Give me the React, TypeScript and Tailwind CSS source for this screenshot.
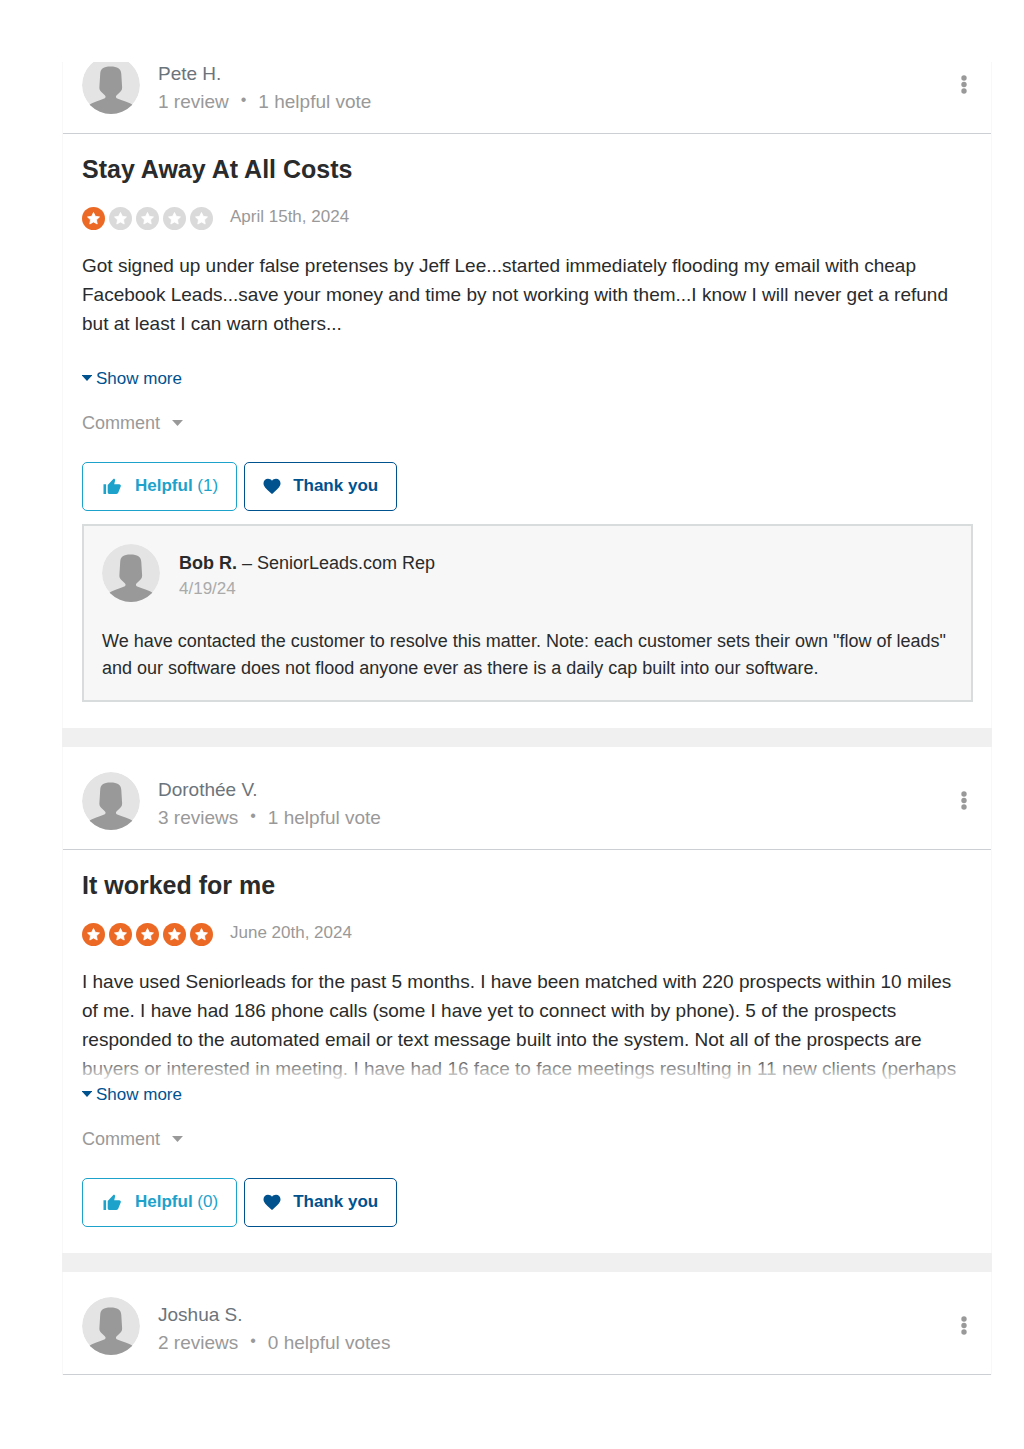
import React from "react";

type Reply = { author: string; role: string; date: string; text: string };

type Review = {
  name: string;
  reviews: string;
  votes: string;
  title?: string;
  rating?: number;
  date?: string;
  text?: string;
  helpful?: number;
  reply?: Reply;
};

const REVIEWS: Review[] = [
  {
    name: "Pete H.",
    reviews: "1 review",
    votes: "1 helpful vote",
    title: "Stay Away At All Costs",
    rating: 1,
    date: "April 15th, 2024",
    text: "Got signed up under false pretenses by Jeff Lee...started immediately flooding my email with cheap Facebook Leads...save your money and time by not working with them...I know I will never get a refund but at least I can warn others...",
    helpful: 1,
    reply: {
      author: "Bob R.",
      role: "SeniorLeads.com Rep",
      date: "4/19/24",
      text: 'We have contacted the customer to resolve this matter. Note: each customer sets their own "flow of leads" and our software does not flood anyone ever as there is a daily cap built into our software.',
    },
  },
  {
    name: "Dorothée V.",
    reviews: "3 reviews",
    votes: "1 helpful vote",
    title: "It worked for me",
    rating: 5,
    date: "June 20th, 2024",
    text: "I have used Seniorleads for the past 5 months. I have been matched with 220 prospects within 10 miles of me. I have had 186 phone calls (some I have yet to connect with by phone). 5 of the prospects responded to the automated email or text message built into the system. Not all of the prospects are buyers or interested in meeting. I have had 16 face to face meetings resulting in 11 new clients (perhaps",
    helpful: 0,
  },
  { name: "Joshua S.", reviews: "2 reviews", votes: "0 helpful votes" },
];

function Avatar() {
  return (
    <svg viewBox="0 0 58 58" className="size-[58px] shrink-0 rounded-full" aria-hidden="true">
      <circle cx="29" cy="29" r="29" fill="#e4e4e4" />
      <path
        fill="#999"
        d="M28.500 10.500c-7 0-10 2-10.300 7.500L17.400 31c-.1 2.400.5 3.600 2 5l3.400 3.200c1.200 1.200 1 2.600-.6 3.300C17.500 44.600 11 46 6 49.500V60h46V49.500C47 46 40 44.600 35.300 42.500c-1.600-.7-1.800-2.100-.6-3.300L38.100 36c1.500-1.400 2.100-2.600 2-5l-.8-13c-.3-5.500-3.800-7.500-10.800-7.500z"
      />
    </svg>
  );
}

function Stars({ rating }: { rating: number }) {
  return (
    <div className="flex gap-1" role="img" aria-label={`${rating} out of 5 stars`}>
      {[1, 2, 3, 4, 5].map((n) => (
        <svg key={n} viewBox="0 0 23 23" className="size-[23px]">
          <circle cx="11.500" cy="11.500" r="11.500" fill={n <= rating ? "#eb6924" : "#dadada"} />
          <path
            fill="#fff"
            stroke="#fff"
            strokeWidth="0.800"
            strokeLinejoin="round"
            d="M11.500 5.500l1.800 3.800 4.200.6-3 2.900.7 4.200-3.700-2-3.700 2 .7-4.200-3-2.900 4.200-.6z"
          />
        </svg>
      ))}
    </div>
  );
}

function Caret({ className }: { className: string }) {
  return (
    <svg viewBox="0 0 10 6" className={className} aria-hidden="true">
      <path d="M0 0h10v.6L5 6 0 .6z" fill="currentColor" />
    </svg>
  );
}

function ReviewHeader({ review }: { review: Review }) {
  return (
    <header className="flex items-start border-b border-[#ccd0d5] px-[18px] pt-[25px] pb-[17px] pl-[19px]">
      <Avatar />
      <div className="ml-[18px] pt-1 text-[19px] leading-7">
        <div className="text-[#6c747b]">{review.name}</div>
        <div className="flex text-[#999]">
          <span>{review.reviews}</span>
          <span className="mx-3 text-base" aria-hidden="true">•</span>
          <span>{review.votes}</span>
        </div>
      </div>
      <button type="button" aria-label="More options" className="mt-[19px] ml-auto flex w-[18px] justify-center text-[#999]">
        <svg viewBox="0 0 6 19" className="h-[19px] w-1.5" fill="currentColor">
          <circle cx="3" cy="3" r="2.700" />
          <circle cx="3" cy="9.500" r="2.700" />
          <circle cx="3" cy="16" r="2.700" />
        </svg>
      </button>
    </header>
  );
}

function OwnerReply({ reply }: { reply: Reply }) {
  return (
    <aside className="mt-[13px] border-2 border-[#d9dcdd] bg-[#f7f7f7] p-[18px]">
      <div className="flex">
        <Avatar />
        <div className="ml-[19px] pt-1.5">
          <div className="text-lg leading-[26px]">
            <b>{reply.author}</b> – {reply.role}
          </div>
          <div className="text-[17px] leading-[26px] text-[#aaa]">{reply.date}</div>
        </div>
      </div>
      <p className="mt-[26px] text-lg leading-[27px]">{reply.text}</p>
    </aside>
  );
}

function ReviewBody({ review }: { review: Review }) {
  return (
    <div className="pt-5 pr-[18px] pb-[26px] pl-[19px]">
      <h2 className="text-[25px] leading-[30px] font-bold">{review.title}</h2>
      <div className="mt-[23px] flex items-start gap-[17px]">
        <Stars rating={review.rating ?? 0} />
        <time className="text-[17px] leading-5 text-[#999]">{review.date}</time>
      </div>
      <div className="relative mt-[21px] min-h-[116px]">
        <p className="pr-2 text-[19px] leading-[29px]">{review.text}</p>
        <div className="absolute inset-x-0 bottom-0 h-[29px] bg-linear-to-b from-white/0 to-white" />
      </div>
      <button type="button" className="mt-0.5 flex items-center gap-1 text-[17px] leading-5 text-[#00528f]">
        <Caret className="mb-0.5 h-1.5 w-2.5" />
        Show more
      </button>
      <button type="button" className="mt-6 flex items-center gap-3 text-lg leading-5 text-[#999]">
        Comment
        <Caret className="h-1.5 w-[11px]" />
      </button>
      <div className="mt-[29px] flex gap-[7px]">
        <button type="button" className="flex h-[49px] items-center rounded-[5px] border border-[#1ca2cb] pr-[18px] pl-5 pb-0.5 text-[17px] text-[#1ca2cb]">
          <svg viewBox="0 0 18 17" className="mr-3.5 h-[17px] w-[18px]" fill="currentColor" aria-hidden="true">
            <path d="M.5 7.300h2.600V17H.5zM4.700 7.900l5.400-5.700c.5-.5 1.300-.5 1.700 0 .3.300.4.800.3 1.200l-.9 3.800h5c1.200 0 2 1.200 1.500 2.300l-2.500 6.300c-.3.700-1 1.200-1.800 1.200H6.500c-1 0-1.800-.8-1.800-1.800z" />
          </svg>
          <b>Helpful</b>&nbsp;({review.helpful})
        </button>
        <button type="button" className="flex h-[49px] items-center rounded-[5px] border border-[#00528f] px-[18px] pb-0.5 text-[17px] font-bold text-[#00528f]">
          <svg viewBox="0 0 18 16" className="mr-3 h-4 w-[18px]" fill="currentColor" aria-hidden="true">
            <path d="M9 16L7.500 14.700C3 10.700.5 8.400.5 5.200.5 2.700 2.500.8 5 .8c1.600 0 3.100.7 4 1.900C9.900 1.500 11.400.8 13 .8c2.500 0 4.500 1.900 4.500 4.400 0 3.200-2.500 5.500-7 9.500z" />
          </svg>
          Thank you
        </button>
      </div>
      {review.reply && <OwnerReply reply={review.reply} />}
    </div>
  );
}

export default function App() {
  return (
    <main
      className="bg-white pt-[62px] pr-8 pb-[74px] pl-[62px] text-[#292b2c]"
      style={{ fontFamily: '"Liberation Sans", Arial, sans-serif' }}
    >
      <div className="flex flex-col gap-[19px] overflow-hidden bg-[#f0f0f0]">
        {REVIEWS.map((review) => (
          <article key={review.name} className="border-x border-[#f8f8f8] bg-white first:-mt-[31px]">
            <ReviewHeader review={review} />
            {review.title && <ReviewBody review={review} />}
          </article>
        ))}
      </div>
    </main>
  );
}
